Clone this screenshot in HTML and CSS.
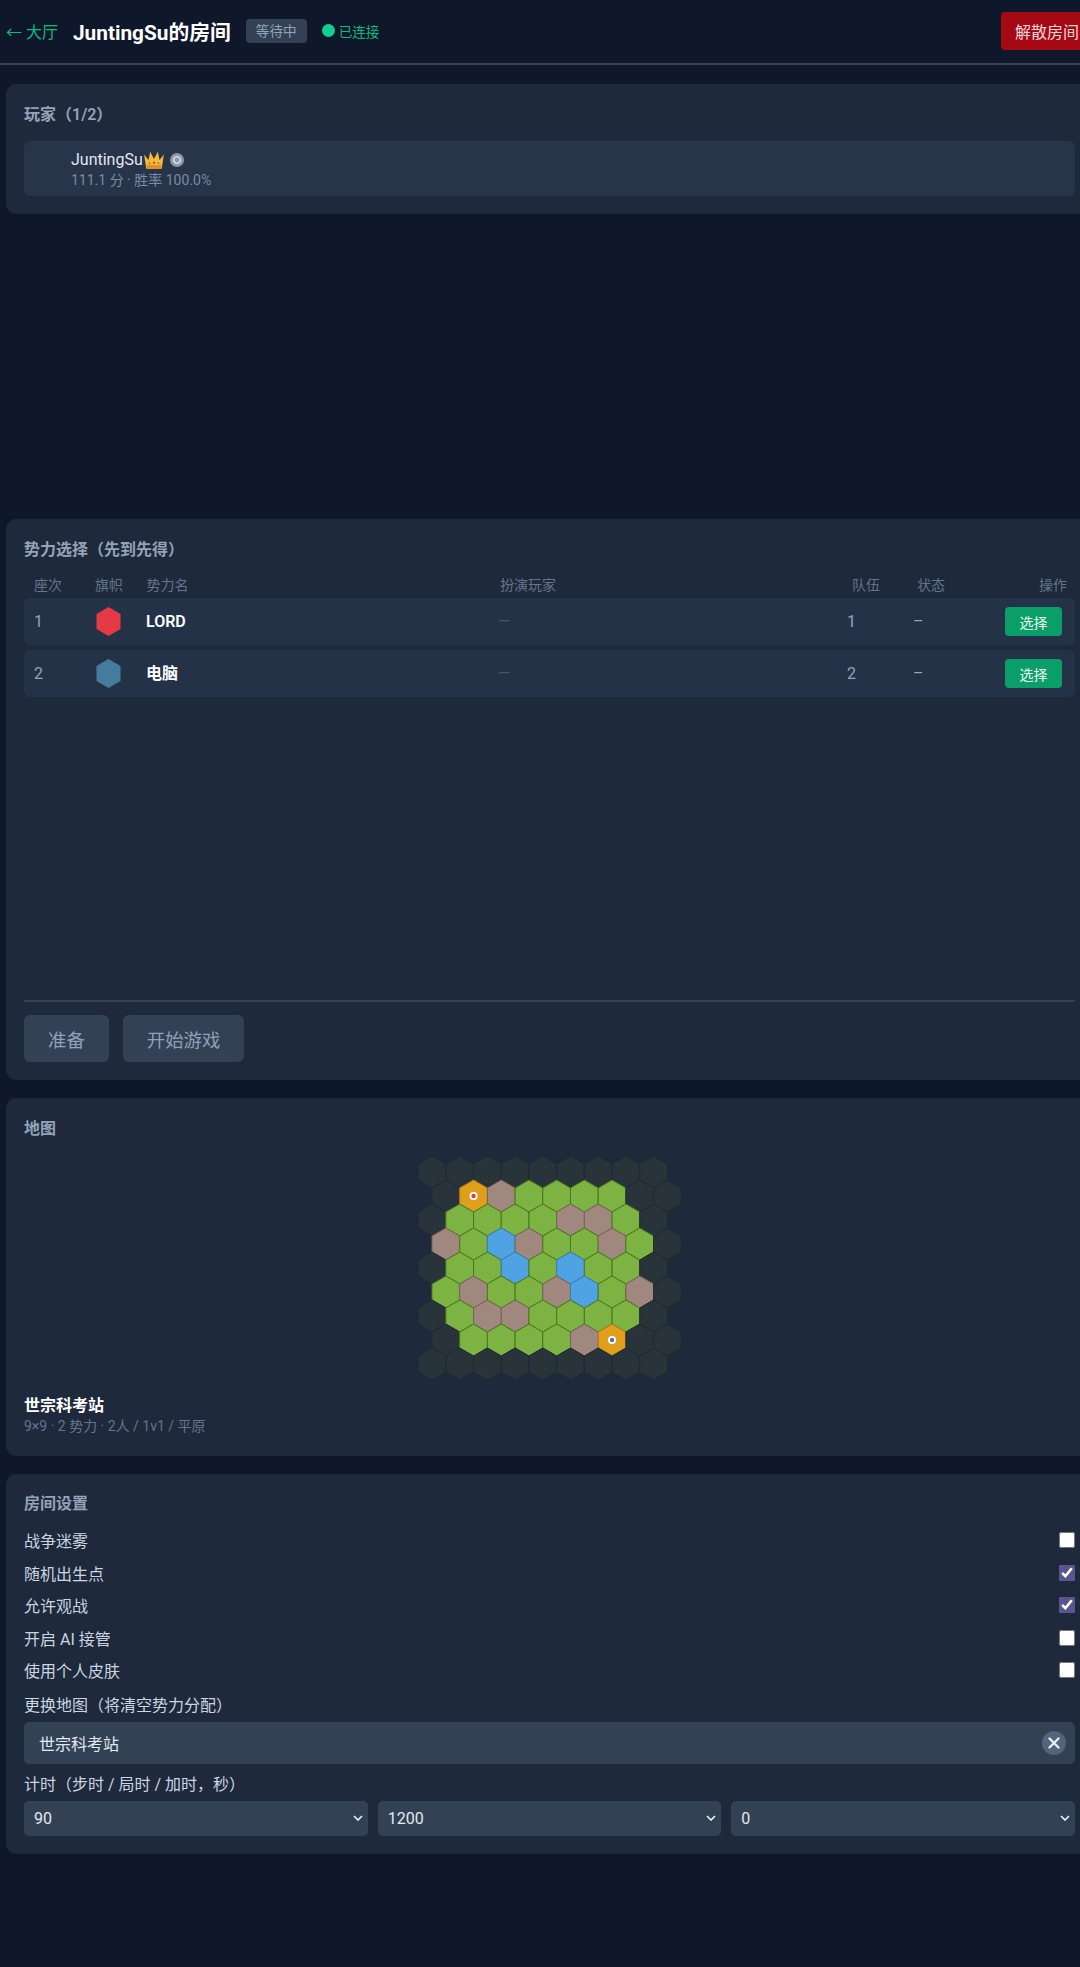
FILE: index.html
```html
<!DOCTYPE html>
<html lang="zh-CN">

<head>
    <meta charset="UTF-8">
    <meta name="viewport" content="width=device-width, initial-scale=1.0">
    <title>JuntingSu的房间</title>
    <link rel="stylesheet" href="styles.css">
</head>

<body>
    <div class="page">
        <header class="room-header">
            <a class="back-link" href="#">← 大厅</a>
            <h1 class="room-title">JuntingSu的房间</h1>
            <span class="status-badge">等待中</span>
            <span class="conn-state"><i class="conn-dot"></i>已连接</span>
            <button class="btn-disband">解散房间</button>
        </header>

        <!-- the players card sits in a tall slot, the rest stays empty -->
        <div class="players-slot">
            <section class="card">
                <h2 class="card-title">玩家（1/2）</h2>
                <div class="player-row">
                    <div class="player-name">
                        JuntingSu
                        <svg class="icon-crown" viewBox="0 0 20 18">
                            <path d="M1 4l4 5 1.500-7.500L10 8l3.500-6.500L15 9l4-5-2 13H3z" fill="#f6bb33" />
                            <path d="M3.400 13.500h13.200l-.5 3.500H3.900z" fill="#e0921f" />
                            <circle cx="10" cy="11.500" r="1.200" fill="#c9562c" />
                            <circle cx="6" cy="12" r=".9" fill="#8a6bc2" />
                            <circle cx="14" cy="12" r=".9" fill="#8a6bc2" />
                        </svg>
                        <svg class="icon-ring" viewBox="0 0 14 14">
                            <circle cx="7" cy="7" r="7" fill="#8b96a8" />
                            <circle cx="7" cy="7" r="4.300" fill="#cdd3dc" />
                            <circle cx="7" cy="7" r="2.400" fill="#8b96a8" />
                        </svg>
                    </div>
                    <div class="player-meta">111.1 分 · 胜率 100.0%</div>
                </div>
            </section>
        </div>

        <section class="card faction-card">
            <h2 class="card-title">势力选择（先到先得）</h2>
            <div class="faction-head">
                <span>座次</span>
                <span>旗帜</span>
                <span>势力名</span>
                <span>扮演玩家</span>
                <span>队伍</span>
                <span>状态</span>
                <span class="head-action">操作</span>
            </div>
            <div class="faction-row">
                <span>1</span>
                <svg class="flag" viewBox="0 0 24 29"><polygon points="12,0 24,7 24,22 12,29 0,22 0,7" fill="#e63946" /></svg>
                <span class="faction-name">LORD</span>
                <span class="empty-player">—</span>
                <span>1</span>
                <span>–</span>
                <button class="btn-pick">选择</button>
            </div>
            <div class="faction-row">
                <span>2</span>
                <svg class="flag" viewBox="0 0 24 29"><polygon points="12,0 24,7 24,22 12,29 0,22 0,7" fill="#457b9d" /></svg>
                <span class="faction-name">电脑</span>
                <span class="empty-player">—</span>
                <span>2</span>
                <span>–</span>
                <button class="btn-pick">选择</button>
            </div>
            <div class="actions">
                <button class="btn-action">准备</button>
                <button class="btn-action">开始游戏</button>
            </div>
        </section>

        <section class="card map-card">
            <h2 class="card-title">地图</h2>
            <svg class="hex-map" viewBox="0 0 263.500 224">
                <defs>
                    <polygon id="hex" points="0,-16 13.850,-8 13.850,8 0,16 -13.850,8 -13.850,-8" />
                </defs>
                <!-- row 0 -->
                <g transform="translate(0,16)">
                    <use href="#hex" class="t-fog" x="14" />
                    <use href="#hex" class="t-fog" x="41.700" />
                    <use href="#hex" class="t-fog" x="69.400" />
                    <use href="#hex" class="t-fog" x="97.100" />
                    <use href="#hex" class="t-fog" x="124.800" />
                    <use href="#hex" class="t-fog" x="152.500" />
                    <use href="#hex" class="t-fog" x="180.200" />
                    <use href="#hex" class="t-fog" x="207.900" />
                    <use href="#hex" class="t-fog" x="235.600" />
                </g>
                <!-- row 1 -->
                <g transform="translate(0,40)">
                    <use href="#hex" class="t-fog" x="27.850" />
                    <use href="#hex" class="t-gold" x="55.550" />
                    <use href="#hex" class="t-rock" x="83.250" />
                    <use href="#hex" class="t-grass" x="110.950" />
                    <use href="#hex" class="t-grass" x="138.650" />
                    <use href="#hex" class="t-grass" x="166.350" />
                    <use href="#hex" class="t-grass" x="194.050" />
                    <use href="#hex" class="t-fog" x="221.750" />
                    <use href="#hex" class="t-fog" x="249.450" />
                    <circle class="spawn-ring" cx="55.550" r="4" />
                    <circle cx="55.550" r="2.200" fill="#e63946" />
                </g>
                <!-- row 2 -->
                <g transform="translate(0,64)">
                    <use href="#hex" class="t-fog" x="14" />
                    <use href="#hex" class="t-grass" x="41.700" />
                    <use href="#hex" class="t-grass" x="69.400" />
                    <use href="#hex" class="t-grass" x="97.100" />
                    <use href="#hex" class="t-grass" x="124.800" />
                    <use href="#hex" class="t-rock" x="152.500" />
                    <use href="#hex" class="t-rock" x="180.200" />
                    <use href="#hex" class="t-grass" x="207.900" />
                    <use href="#hex" class="t-fog" x="235.600" />
                </g>
                <!-- row 3 -->
                <g transform="translate(0,88)">
                    <use href="#hex" class="t-rock" x="27.850" />
                    <use href="#hex" class="t-grass" x="55.550" />
                    <use href="#hex" class="t-water" x="83.250" />
                    <use href="#hex" class="t-rock" x="110.950" />
                    <use href="#hex" class="t-grass" x="138.650" />
                    <use href="#hex" class="t-grass" x="166.350" />
                    <use href="#hex" class="t-rock" x="194.050" />
                    <use href="#hex" class="t-grass" x="221.750" />
                    <use href="#hex" class="t-fog" x="249.450" />
                </g>
                <!-- row 4 -->
                <g transform="translate(0,112)">
                    <use href="#hex" class="t-fog" x="14" />
                    <use href="#hex" class="t-grass" x="41.700" />
                    <use href="#hex" class="t-grass" x="69.400" />
                    <use href="#hex" class="t-water" x="97.100" />
                    <use href="#hex" class="t-grass" x="124.800" />
                    <use href="#hex" class="t-water" x="152.500" />
                    <use href="#hex" class="t-grass" x="180.200" />
                    <use href="#hex" class="t-grass" x="207.900" />
                    <use href="#hex" class="t-fog" x="235.600" />
                </g>
                <!-- row 5 -->
                <g transform="translate(0,136)">
                    <use href="#hex" class="t-grass" x="27.850" />
                    <use href="#hex" class="t-rock" x="55.550" />
                    <use href="#hex" class="t-grass" x="83.250" />
                    <use href="#hex" class="t-grass" x="110.950" />
                    <use href="#hex" class="t-rock" x="138.650" />
                    <use href="#hex" class="t-water" x="166.350" />
                    <use href="#hex" class="t-grass" x="194.050" />
                    <use href="#hex" class="t-rock" x="221.750" />
                    <use href="#hex" class="t-fog" x="249.450" />
                </g>
                <!-- row 6 -->
                <g transform="translate(0,160)">
                    <use href="#hex" class="t-fog" x="14" />
                    <use href="#hex" class="t-grass" x="41.700" />
                    <use href="#hex" class="t-rock" x="69.400" />
                    <use href="#hex" class="t-rock" x="97.100" />
                    <use href="#hex" class="t-grass" x="124.800" />
                    <use href="#hex" class="t-grass" x="152.500" />
                    <use href="#hex" class="t-grass" x="180.200" />
                    <use href="#hex" class="t-grass" x="207.900" />
                    <use href="#hex" class="t-fog" x="235.600" />
                </g>
                <!-- row 7 -->
                <g transform="translate(0,184)">
                    <use href="#hex" class="t-fog" x="27.850" />
                    <use href="#hex" class="t-grass" x="55.550" />
                    <use href="#hex" class="t-grass" x="83.250" />
                    <use href="#hex" class="t-grass" x="110.950" />
                    <use href="#hex" class="t-grass" x="138.650" />
                    <use href="#hex" class="t-rock" x="166.350" />
                    <use href="#hex" class="t-gold" x="194.050" />
                    <use href="#hex" class="t-fog" x="221.750" />
                    <use href="#hex" class="t-fog" x="249.450" />
                    <circle class="spawn-ring" cx="194.050" r="4" />
                    <circle cx="194.050" r="2.200" fill="#457b9d" />
                </g>
                <!-- row 8 -->
                <g transform="translate(0,208)">
                    <use href="#hex" class="t-fog" x="14" />
                    <use href="#hex" class="t-fog" x="41.700" />
                    <use href="#hex" class="t-fog" x="69.400" />
                    <use href="#hex" class="t-fog" x="97.100" />
                    <use href="#hex" class="t-fog" x="124.800" />
                    <use href="#hex" class="t-fog" x="152.500" />
                    <use href="#hex" class="t-fog" x="180.200" />
                    <use href="#hex" class="t-fog" x="207.900" />
                    <use href="#hex" class="t-fog" x="235.600" />
                </g>
            </svg>
            <div class="map-name">世宗科考站</div>
            <div class="map-meta">9×9 · 2 势力 · 2人 / 1v1 / 平原</div>
        </section>

        <section class="card settings-card">
            <h2 class="card-title">房间设置</h2>
            <label class="setting-row">战争迷雾<input type="checkbox"></label>
            <label class="setting-row">随机出生点<input type="checkbox" checked></label>
            <label class="setting-row">允许观战<input type="checkbox" checked></label>
            <label class="setting-row">开启 AI 接管<input type="checkbox"></label>
            <label class="setting-row">使用个人皮肤<input type="checkbox"></label>
            <div class="field-label map-label">更换地图（将清空势力分配）</div>
            <div class="map-picker">
                <span>世宗科考站</span>
                <button class="btn-clear">
                    <svg viewBox="0 0 24 24" width="24" height="24">
                        <path d="M7.500 7.500l9 9M16.500 7.500l-9 9" stroke="#e8eef6" stroke-width="2.400" stroke-linecap="round" fill="none" />
                    </svg>
                </button>
            </div>
            <div class="field-label timer-label">计时（步时 / 局时 / 加时，秒）</div>
            <div class="timer-row">
                <select><option>90</option></select>
                <select><option>1200</option></select>
                <select><option>0</option></select>
            </div>
        </section>
    </div>
</body>

</html>
```

FILE: styles.css
```css
* {
    box-sizing: border-box;
}

html,
body {
    margin: 0;
    height: 100%;
    overflow: hidden;
    background-color: #0f172a;
}

body {
    color: #e2e8f0;
    font-family: Roboto, "Noto Sans CJK SC", sans-serif;
    font-size: 16px;
}

button {
    font-family: inherit;
    border: none;
}

/* the room is a little wider than the window, so it clips on the right */
.page {
    width: 1099px;
}

.room-header {
    display: flex;
    align-items: center;
    height: 65px;
    padding: 0 6px 2px;
    border-bottom: 2px solid #334155;
}

.back-link {
    margin-right: 15px;
    color: #10b981;
    font-size: 16px;
    text-decoration: none;
}

.room-title {
    margin: 0 15px 0 0;
    color: #fff;
    font-size: 20.800px;
    font-weight: 700;
}

.status-badge {
    padding: 2px 10px;
    color: #94a3b8;
    font-size: 13.600px;
    line-height: 20px;
    background-color: #334155;
    border-radius: 4px;
}

.conn-state {
    display: flex;
    align-items: center;
    gap: 4px;
    margin-left: 15px;
    color: #10b981;
    font-size: 13.600px;
}

.conn-dot {
    width: 13px;
    height: 13px;
    background-color: #10d08f;
    border-radius: 50%;
}

.btn-disband {
    width: 92px;
    height: 38px;
    margin-left: auto;
    color: #f1d5d8;
    font-size: 16px;
    background-color: #a50a14;
    border-radius: 4px;
}

.players-slot {
    height: 454px;
    padding-top: 19px;
}

.card {
    margin: 0 6px 18px;
    padding: 19px 18px 18px;
    background-color: #1e293b;
    border-radius: 10px;
}

.card-title {
    margin: 0 0 15px;
    color: #94a3b8;
    font-size: 16px;
    font-weight: 600;
    line-height: 23px;
}

.player-row {
    height: 55px;
    padding: 8px 47px;
    background-color: #273449;
    border-radius: 6px;
}

.player-name {
    display: flex;
    align-items: center;
    height: 21px;
    font-size: 16px;
}

.icon-crown {
    width: 22px;
    height: 20px;
}

.icon-ring {
    width: 14px;
    height: 14px;
    margin-left: 5px;
}

.player-meta {
    color: #7a8ba3;
    font-size: 14px;
    line-height: 20px;
}

.faction-card {
    display: flex;
    flex-direction: column;
    height: 561px;
}

.faction-card .card-title {
    margin-bottom: 0;
}

.faction-head,
.faction-row {
    display: grid;
    align-items: center;
    line-height: 20px;
}

.faction-head {
    grid-template-columns: 61px 51.500px 353.500px 352px 65px 1fr auto;
    height: 37px;
    padding: 10px 8px 0 10px;
    color: #64748b;
    font-size: 14px;
}

.head-action {
    text-align: right;
}

.faction-row {
    grid-template-columns: 62px 50px 352px 349px 66px 1fr auto;
    height: 47px;
    margin-bottom: 5px;
    padding: 0 13px 0 10px;
    color: #94a3b8;
    font-size: 16px;
    background-color: #243247;
    border-radius: 6px;
}

.flag {
    width: 25px;
    height: 29px;
}

.faction-name {
    color: #fff;
    font-weight: 600;
}

.empty-player {
    color: #475569;
}

.btn-pick {
    width: 57px;
    height: 29px;
    color: #e9fbf3;
    font-size: 14px;
    background-color: #0a9e68;
    border-radius: 4px;
}

.actions {
    display: flex;
    gap: 14px;
    margin-top: auto;
    padding-top: 13px;
    border-top: 2px solid #334155;
}

.btn-action {
    height: 47px;
    padding: 0 24px;
    color: #8fa0b8;
    font-size: 18.400px;
    background-color: #334155;
    border-radius: 6px;
}

.hex-map {
    display: block;
    width: 263.500px;
    height: 224px;
    margin: 0 auto;
}

.t-fog {
    fill: #29343a;
    stroke: #1e2a33;
}

.t-grass {
    fill: #7cb342;
    stroke: #4a7a1a;
}

.t-rock {
    fill: #a1887f;
    stroke: #75645a;
}

.t-water {
    fill: #4fa3e3;
    stroke: #3a7fb5;
}

.t-gold {
    fill: #e09f1a;
    stroke: #b07d14;
}

.spawn-ring {
    fill: #fff;
}

.map-name {
    margin-top: 15px;
    color: #fff;
    font-weight: 600;
    line-height: 21px;
}

.map-meta {
    color: #64748b;
    font-size: 14px;
    line-height: 20px;
}

.map-card {
    padding-bottom: 20px;
}

.map-card .card-title {
    margin-bottom: 16px;
}

.settings-card {
    padding-top: 18px;
}

.settings-card .card-title {
    margin-bottom: 9px;
}

.setting-row {
    display: flex;
    align-items: center;
    justify-content: space-between;
    height: 32.500px;
    color: #cbd5e1;
}

.setting-row input {
    width: 16px;
    height: 16px;
    margin: 0;
    accent-color: #5a5590;
}

.field-label {
    color: #cbd5e1;
    line-height: 32px;
}

.map-label {
    margin-top: 3px;
}

.map-picker {
    display: flex;
    align-items: center;
    justify-content: space-between;
    height: 42px;
    padding: 0 9px 0 15px;
    color: #e2e8f0;
    background-color: #334155;
    border-radius: 5px;
}

.btn-clear {
    display: flex;
    width: 24px;
    height: 24px;
    padding: 0;
    background-color: #55637b;
    border-radius: 50%;
}

.timer-label {
    margin-top: 5px;
}

.timer-row {
    display: flex;
    gap: 10px;
}

.timer-row select {
    flex: 1;
    min-width: 0;
    height: 35px;
    padding: 0 10px;
    color: #e2e8f0;
    font-family: inherit;
    font-size: 16px;
    background: #334155 url("data:image/svg+xml,%3Csvg xmlns='http://www.w3.org/2000/svg' viewBox='0 0 10 6'%3E%3Cpath d='M1 1l4 4 4-4' fill='none' stroke='%23f1f5f9' stroke-width='1.600'/%3E%3C/svg%3E") no-repeat right 5px center / 10px 6px;
    border: none;
    border-radius: 5px;
    appearance: none;
}
```
